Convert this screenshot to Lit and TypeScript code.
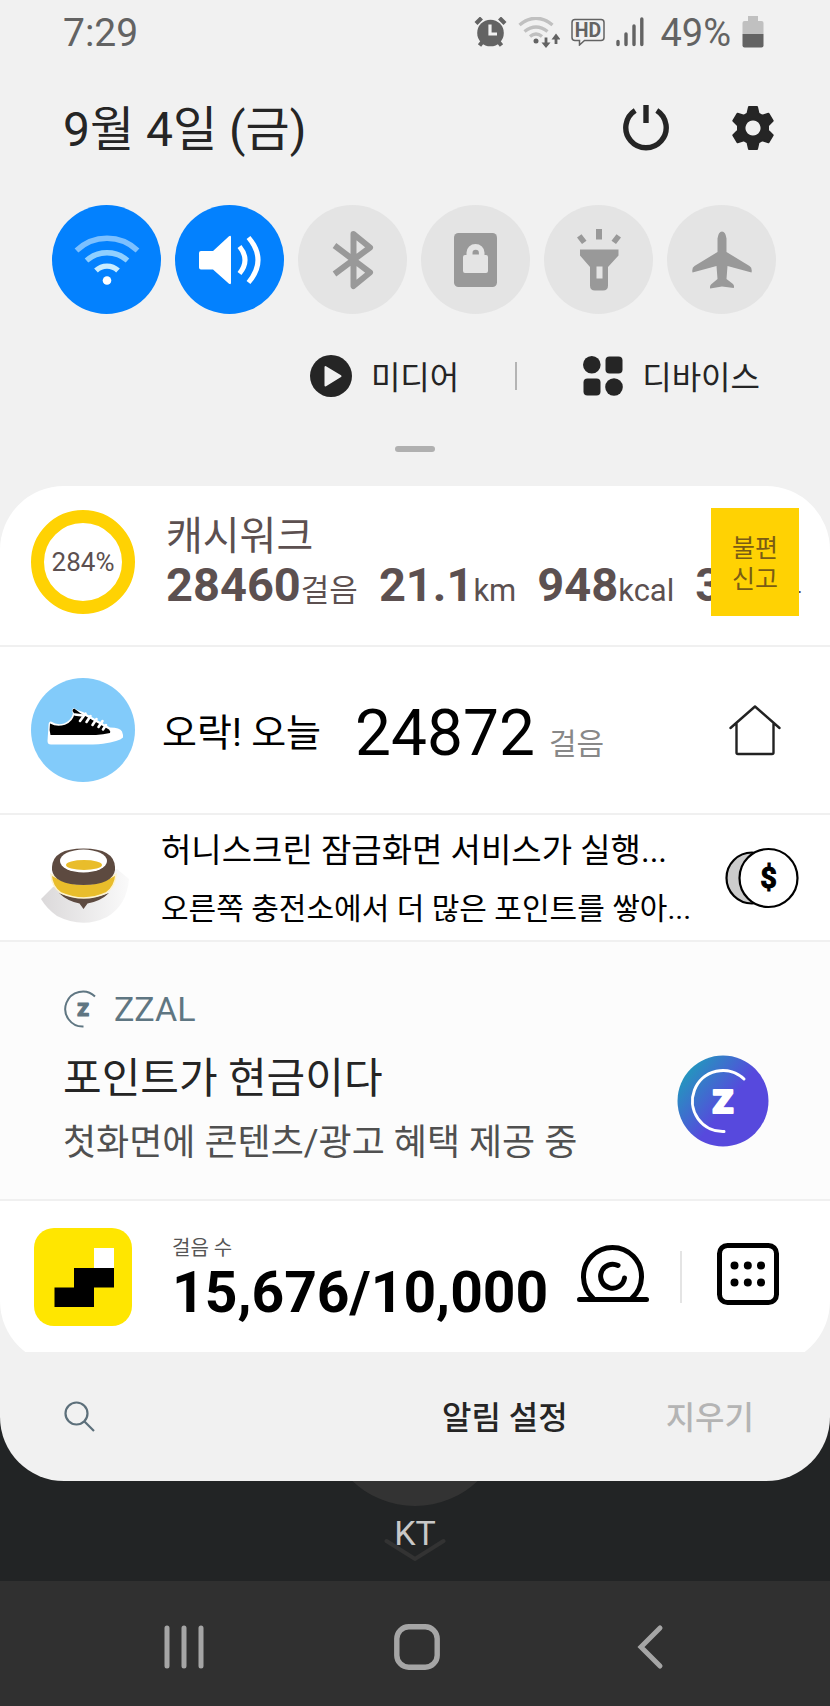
import { LitElement, html, svg, css } from "lit";
import { customElement, state } from "lit/decorators.js";

const wifi = svg`<svg width="66" height="54" viewBox="0 0 66 54" fill="none" stroke-width="5.4">
  <path d="M2.500 17.500A44 44 0 0 1 63.500 17.500" stroke="#7cc0ff"/>
  <path d="M12.500 27.500A31 31 0 0 1 53.500 27.500" stroke="#8fcfff"/>
  <path d="M22 37.500A16 16 0 0 1 44 37.500" stroke="#c8ecff"/>
  <circle cx="33" cy="47.500" r="4.300" fill="#fff"/></svg>`;

const sound = svg`<svg width="64" height="50" viewBox="0 0 64 50" fill="none" stroke="#fff" stroke-width="5">
  <path d="M3 16h12L31 1.200q2-1.200 2 1v45.600q0 2.200-2 1L15 34.500H3q-2 0-2-2V18q0-2 2-2z" fill="#fff" stroke="none"/>
  <path d="M41.500 11.500q11 13.500 0 27"/><path d="M50.500 2.500q19 22.500 0 45"/></svg>`;

const bluetooth = svg`<svg width="42" height="62" viewBox="0 0 42 62" fill="none" stroke="#999" stroke-width="6" stroke-linejoin="round">
  <path d="M2.500 16.500L38 43.500 21.500 57V5L38 18.500 2.500 45"/></svg>`;

const lock = svg`<svg width="43" height="54" viewBox="0 0 43 54">
  <rect width="43" height="54" rx="4.500" fill="#999"/>
  <path d="M12.500 22v-2.500a9 8.500 0 0 1 18 0V22h1.500q2 0 2 2v14q0 2-2 2H11q-2 0-2-2V24q0-2 2-2z" fill="#e4e4e4"/>
  <path d="M18.500 21.500v-1.500a3.200 3.200 0 0 1 6.400 0v1.500z" fill="#999"/></svg>`;

const torch = svg`<svg width="46" height="62" viewBox="0 0 46 62" fill="#999">
  <path d="M20 0h6v10.500h-6zM1 8.500l4.500-3.300 5 6.600L6 15zM45 8.500l-4.500-3.300-5 6.600L40 15z"/>
  <path fill-rule="evenodd" d="M4 20.500h38.500v6L32 38v18.500q0 5-5 5h-8q-5 0-5-5V38L4 26.500zM20.500 37.500v12h6v-12z"/></svg>`;

const plane = svg`<svg width="60" height="58" viewBox="0 0 60 58" fill="#999">
  <path d="M30 0.500q3.500 0 4.500 7v13.500L57.500 35q3 2 2 6.500L35.500 35 34.500 48l6.500 5q1.500 1.500 .8 4L30 55.500 18.200 57.500q-.7-2.500.8-4L25.500 48 24.500 35 .500 41.500q-1-4.500 2-6.500l23-14V7.500q1-7 4.500-7z"/></svg>`;

const alarm = svg`<svg width="33" height="30" viewBox="0 0 33 30" fill="none" stroke="#636363">
  <path d="M5.500 28.500l4-5M27.500 28.500l-4-5M2 6.500l5.500-5.500M31 6.500L25.500 1" stroke-width="4.200"/>
  <circle cx="16.500" cy="16" r="13.300" fill="#636363" stroke="none"/>
  <path d="M16 7.500v9.500h7" stroke="#f1f1f1" stroke-width="3.200"/></svg>`;

const wifiData = svg`<svg width="42" height="31" viewBox="0 0 42 31" fill="none" stroke-width="3.400">
  <path d="M1.500 8Q18-5.500 34.500 8M6.500 14.500q11.500-9 23 0M12 19.500q6-5 12 0" stroke="#c0c0c0"/>
  <circle cx="18" cy="24" r="2.500" fill="#636363"/>
  <path d="M28 20.500v8M38 27v-8" stroke="#636363" stroke-width="2.800"/>
  <path d="M23.500 25.500l4.500 5.500 4.500-5.500zM33.500 22.500l4.500-6 4.500 6z" fill="#636363"/></svg>`;

const hd = svg`<svg width="34" height="28" viewBox="0 0 34 28" fill="none" stroke="#636363">
  <path d="M4 1.500h26q3 0 3 3v15q0 3-3 3H13.500l-5 4.500v-4.500H4q-3 0-3-3v-15q0-3 3-3z" stroke-width="1.500"/>
  <text x="17" y="19" text-anchor="middle" font-family="Roboto, sans-serif" font-weight="700" font-size="19.500" fill="#636363" stroke="none">HD</text></svg>`;

const signal = svg`<svg class="signal" width="28" height="30" viewBox="0 0 28 30" stroke="#636363" stroke-width="3.400" stroke-linecap="round">
  <path d="M2 24.500v3M10 17v10.500M18 9v18.500M25.800 2v25.500"/></svg>`;

const battery = svg`<svg width="22" height="32" viewBox="0 0 22 32">
  <path d="M6 0h10v5h3.500q2 0 2 2v11H.5V7q0-2 2-2H6z" fill="#c0c0c0"/>
  <path d="M.5 18h21v11.500q0 2-2 2h-17q-2 0-2-2z" fill="#636363"/></svg>`;

const power = svg`<svg width="46" height="48" viewBox="0 0 46 48" fill="none" stroke="#252525" stroke-width="5.400">
  <path d="M12.200 6.500a20.200 20.200 0 1 0 21.600 0"/><path d="M23 1v18"/></svg>`;

const gear = svg`<svg width="44" height="46" viewBox="0 0 44 46">
  <path fill-rule="evenodd" fill="#252525" stroke="#252525" stroke-width="2" stroke-linejoin="round" d="M18 2h8l1.500 6.500 3.500 2.200 6.500-2 4.200 7-4.700 4.800v5l4.700 4.800-4.200 7-6.500-2-3.500 2.200L26 44h-8L16.500 37.500l-3.500-2.200-6.500 2-4.200-7L7 25.500v-5l-4.700-4.800 4.200-7 6.500 2 3.500-2.200zM22 14.500a8.500 8.500 0 1 0 .01 0z"/></svg>`;

const play = svg`<svg width="42" height="42" viewBox="0 0 42 42"><circle cx="21" cy="21" r="21" fill="#252525"/>
  <path d="M15.500 12v18.500L30.500 21.200z" fill="#f1f1f1" stroke="#f1f1f1" stroke-width="2" stroke-linejoin="round"/></svg>`;

const devices = svg`<svg width="40" height="40" viewBox="0 0 40 40" fill="#252525"><circle cx="8.800" cy="8.800" r="8.800"/>
  <rect x="22.500" y="0.500" width="17" height="17" rx="4"/><rect x="0.500" y="22.500" width="17" height="17" rx="4"/><circle cx="31" cy="31" r="8.800"/></svg>`;

const shoe = svg`<svg class="badge" width="104" height="104" viewBox="0 0 104 104">
  <circle cx="52" cy="52" r="52" fill="#82cbfa"/>
  <path d="M17.500 47.500q0-4 2.500-4 6 4 13 2 7-3 9-10-2-3 0-5 1.500-1 4 1.500l6 2L79 49.500q10 0 12 4 1.500 4 1 6-4 4-20 6.300-4 .6-10 .6H20q-3.500 0-3.500-3.500z" fill="#fff"/>
  <path d="M19 45.500q7 4 15 1.200 8-3.200 9.500-11L41.500 33q0-2.500 2-2.300l6 4.500L78 51.500q2 2 1 3.500-7 1.500-14 2H19.500q-1.500-5-.5-11.500z"/>
  <path d="M49 43l5.500-7.500M55.500 44l4-6M61.500 47l4-6M67.500 49l4-6M72 51.500l3-4.500M44 36.500l8 1" stroke="#fff" stroke-width="2.600" stroke-linecap="round"/></svg>`;

const home = svg`<svg width="54" height="54" viewBox="0 0 54 54" fill="none" stroke="#222" stroke-width="2.400" stroke-linejoin="round" stroke-linecap="round">
  <path d="M2.500 25L27 3.500 51.500 25M8.500 20.500v29q0 1.500 1.500 1.500h34q1.500 0 1.500-1.500v-29"/></svg>`;

const honey = svg`<svg class="pot" width="92" height="80" viewBox="0 0 92 80">
  <defs><linearGradient id="shade" x1="0" x2="1"><stop offset="0" stop-color="#dbd9da"/><stop offset="1" stop-color="#fafafa"/></linearGradient></defs>
  <path d="M2 54L14 42 78 24 90 34Q88 60 68 72 44 84 18 71 8 64 2 54z" fill="url(#shade)"/>
  <path d="M20 48q24 10 50 0-8 8-21.500 10.500L44.500 64 40.500 58.500Q28 56 20 48z" fill="#5d4a40"/>
  <path d="M12 29.500Q44 49 77 29.500 76 42 67 48 45 58 22 48 13 42 12 29.500z" fill="#e9bd2b" stroke="#fdf3cf" stroke-width="1.500"/>
  <path d="M13 22Q14 3.500 44.500 3.500T76 22v3Q74 39.500 44.500 40 15 39.500 13 25z" fill="#5d4a40"/>
  <ellipse cx="44.500" cy="16" rx="23.500" ry="11.500" fill="#fff"/><ellipse cx="45" cy="20" rx="18" ry="5" fill="#e9bd2b"/></svg>`;

const coins = svg`<svg width="74" height="62" viewBox="0 0 74 62" stroke="#000" stroke-width="2.200">
  <circle cx="27" cy="31" r="25.500" fill="#ccc"/><circle cx="43.500" cy="31" r="29" fill="#fff"/>
  <text x="43.500" y="41" text-anchor="middle" font-family="Roboto, sans-serif" font-weight="700" font-size="29" stroke-width="1">$</text></svg>`;

const zSmall = svg`<svg width="38" height="38" viewBox="0 0 38 38" fill="none" stroke="#5f7682">
  <path d="M32 6.500A17.500 17.500 0 1 0 20.500 36.500" stroke-width="2"/>
  <text x="20" y="26" text-anchor="middle" font-family="Roboto, sans-serif" font-weight="700" font-size="24" fill="#5f7682" stroke-width="1.200" stroke-linejoin="round">z</text></svg>`;

const zBadge = svg`<svg class="z-badge" width="92" height="92" viewBox="0 0 92 92">
  <defs><linearGradient id="zbg" x1="0.050" y1="0.150" x2="0.550" y2="0.550"><stop offset="0" stop-color="#1f9dbb"/><stop offset="1" stop-color="#5749dd"/></linearGradient></defs>
  <circle cx="46" cy="46" r="45.500" fill="url(#zbg)"/>
  <path d="M67 24A30.500 30.500 0 1 0 47 76.500" fill="none" stroke="#fff" stroke-width="3" stroke-linecap="round"/>
  <text x="46" y="57.500" text-anchor="middle" font-family="Roboto, sans-serif" font-weight="700" font-size="43" fill="#fff" stroke="#fff" stroke-width="2.200" stroke-linejoin="round">z</text></svg>`;

const steps = svg`<svg width="98" height="98" viewBox="0 0 98 98"><rect width="98" height="98" rx="20" fill="#ffe600"/>
  <path d="M60 20h20v20H60z" fill="#fff"/><path d="M40 40h40v19.500H60V79H20.500V59.500H40z"/></svg>`;

const snail = svg`<svg width="74" height="60" viewBox="0 0 74 60" fill="none" stroke="#000" stroke-width="5" stroke-linecap="round">
  <path d="M17 54A29 29 0 1 1 56 54M3.500 55.500h67"/><path d="M42 21.500A12 12 0 1 0 48.500 34"/></svg>`;

const keypad = svg`<svg width="64" height="64" viewBox="0 0 64 64"><rect x="3.500" y="3.500" width="57" height="57" rx="8" fill="none" stroke="#000" stroke-width="5"/>
  <path d="M18.500 23.500h.01M31.800 23.500h.01M45 23.500h.01M18.500 40.500h.01M31.800 40.500h.01M45 40.500h.01" stroke="#000" stroke-width="8" stroke-linecap="round"/></svg>`;

const search = svg`<svg width="32" height="32" viewBox="0 0 32 32" fill="none" stroke="#5c6f7a" stroke-width="2.200"><circle cx="12.500" cy="12.500" r="11"/><path d="M20.500 20.500L30 30"/></svg>`;

const recents = svg`<svg width="44" height="46" viewBox="0 0 44 46" stroke="#a5a5a5" stroke-width="5" stroke-linecap="round"><path d="M5 4v38M22 4v38M39 4v38"/></svg>`;
const homeKey = svg`<svg width="46" height="46" viewBox="0 0 46 46"><rect x="2.800" y="2.800" width="40.400" height="40.400" rx="12" fill="none" stroke="#a5a5a5" stroke-width="5.400"/></svg>`;
const back = svg`<svg width="28" height="46" viewBox="0 0 28 46" fill="none" stroke="#a5a5a5" stroke-width="5" stroke-linecap="round"><path d="M24 4L5 23l19 19"/></svg>`;

@customElement("quick-toggles")
export class QuickToggles extends LitElement {
  static styles = css`
    :host { display: flex; justify-content: space-between; padding: 0 54px 0 52px; }
    .toggle { width: 109px; height: 109px; padding: 0; border: 0; border-radius: 50%; background: #e4e4e4;
      display: flex; align-items: center; justify-content: center; }
    .toggle.on { background: #0381fe; }
  `;
  @state() private items = [
    { label: "Wi-Fi", icon: wifi, on: true },
    { label: "소리", icon: sound, on: true },
    { label: "블루투스", icon: bluetooth, on: false },
    { label: "화면 잠금", icon: lock, on: false },
    { label: "손전등", icon: torch, on: false },
    { label: "비행기 탑승 모드", icon: plane, on: false },
  ];
  render() {
    return this.items.map(
      (i) => html`<button class="toggle ${i.on ? "on" : ""}" aria-label=${i.label} aria-pressed=${i.on}>${i.icon}</button>`
    );
  }
}

@customElement("app-root")
export class AppRoot extends LitElement {
  static styles = css`
    :host { display: flex; flex-direction: column; min-height: 100vh; background: #222425; color: #252525;
      font-family: Roboto, "Noto Sans CJK KR", sans-serif; }
    * { box-sizing: border-box; }
    svg { display: block; flex: none; }
    button { font: inherit; color: inherit; background: none; border: 0; padding: 0; margin: 0; }
    ul { list-style: none; margin: 0; padding: 0; }
    .panel { background: #f1f1f1; border-radius: 0 0 64px 64px; position: relative; }
    .status { display: flex; align-items: center; height: 64px; padding: 0 66px 0 63px; font-size: 39px; line-height: 48px; color: #636363; }
    .time { padding-top: 2px; }
    .icons { display: flex; align-items: center; margin-left: auto; gap: 11px; }
    .signal { margin-right: 5px; }
    .charge { font-size: 38px; padding-top: 2px; }
    .head { display: flex; align-items: center; height: 141px; padding: 0 55px 14px 63px; }
    .date { font-size: 48px; line-height: 64px; font-weight: 400; margin: 0 auto 0 0; padding-top: 4px; }
    .head-actions { display: flex; align-items: center; gap: 62px; }
    .shortcuts { display: flex; justify-content: flex-end; align-items: center; padding: 36px 70px 0 0; height: 88px; font-size: 32px; line-height: 48px; }
    .shortcut { display: flex; align-items: center; gap: 19px; }
    .shortcut-label { padding-top: 3px; }
    .rule { width: 2px; height: 28px; background: #b4b4b4; margin: 0 66px 0 56px; }
    .handle { width: 40px; height: 6px; border-radius: 3px; background: #b0b0b0; margin: 44px auto 34px; }
    .clip { overflow: hidden; }
    .list { background: #fff; border-radius: 64px; overflow: hidden; margin-bottom: -13px; }
    .item { position: relative; display: flex; align-items: center; border-bottom: 2px solid #f0f0f0; }
    .item:last-child { border-bottom: 0; }

    .cash { height: 161px; padding: 0 28px 0 31px; gap: 31px; color: #5c5050; }
    .ring { width: 104px; height: 104px; border: 13px solid #ffd203; border-radius: 50%; margin-bottom: 8px; flex: none; display: flex; align-items: center; justify-content: center; font-size: 26px; line-height: 32px; }
    .cash-text { flex: 1; min-width: 0; overflow: hidden; white-space: nowrap; padding-top: 4px; }
    .cash-title { font-size: 40px; line-height: 42px; }
    .stats { display: flex; gap: 21px; font-size: 31px; line-height: 54px; }
    .stats b { font-size: 47px; }
    .stats .last { font-size: 28px; }
    .report { position: absolute; top: 22px; right: 31px; width: 88px; height: 108px; padding-top: 4px; background: #ffd203; color: #7a5c14; font-size: 25px; line-height: 31px; }

    .walk { height: 168px; padding: 0 48px 0 31px; color: #000; }
    .badge { margin-right: 27px; }
    .walk-label { font-size: 38px; line-height: 48px; margin-right: 34px; padding-top: 6px; }
    .walk-count { font-size: 64px; line-height: 80px; margin-right: 14px; padding-top: 8px; }
    .walk-unit { font-size: 30px; line-height: 40px; color: #888; padding-top: 28px; }
    .push { margin-left: auto; }

    .honey { height: 127px; padding: 0 31px 0 39px; color: #000; gap: 30px; }
    .pot { margin-top: 14px; }
    .honey-text { flex: 1; white-space: nowrap; padding-top: 4px; }
    .honey-title { font-size: 33px; line-height: 58px; }
    .honey-body { font-size: 30px; line-height: 58px; }

    .zzal { height: 259px; padding: 20px 61px 0 63px; background: #fcfcfc; }
    .zzal-text { flex: 1; }
    .app { display: flex; align-items: center; gap: 13px; font-size: 34px; line-height: 44px; color: #5f7682; }
    .zzal-title { font-size: 42px; line-height: 64px; margin-top: 16px; }
    .zzal-body { font-size: 36px; line-height: 64px; color: #505050; }
    .z-badge { margin-top: 40px; }

    .goal { height: 164px; padding: 0 50px 13px 34px; color: #000; }
    .goal-text { margin-left: 40px; padding-top: 8px; }
    .goal-label { font-size: 20px; line-height: 24px; color: #555; }
    .goal-count { font-size: 57px; line-height: 66px; font-weight: 700; }
    .goal-actions { display: flex; align-items: center; margin-left: auto; padding-bottom: 6px; }
    .goal-rule { width: 2px; height: 52px; background: #e4e4e4; margin: 6px 34px 0 30px; }

    .foot { display: flex; align-items: center; height: 129px; padding: 0 76px 0 64px; font-size: 32px; line-height: 48px; font-weight: 500; }
    .foot-actions { display: flex; gap: 98px; margin-left: auto; padding-top: 2px; }
    .muted { color: #b4b4b4; }

    .behind { flex: 1; display: flex; flex-direction: column; align-items: center; position: relative; height: 100px; overflow: hidden; padding-top: 32px; }
    .orb { position: absolute; left: 50%; bottom: calc(100% - 25px); width: 182px; height: 182px; margin-left: -91px; border-radius: 50%; background: #333; }
    .chevron { position: absolute; left: 50%; top: 56px; margin-left: -31px; }
    .carrier { position: relative; font-size: 34px; line-height: 40px; color: #c8c8c8; }
    .nav { display: grid; grid-template-columns: repeat(3, 1fr); justify-items: center; align-items: center; height: 125px; padding: 6px 64px 0 68px; background: #303030; }
  `;

  render() {
    return html`
      <main class="panel">
        <div class="status">
          <span class="time">7:29</span>
          <div class="icons">${alarm}${wifiData}${hd}${signal}<span class="charge">49%</span>${battery}</div>
        </div>
        <header class="head">
          <h1 class="date">9월 4일 (금)</h1>
          <div class="head-actions">
            <button aria-label="전원">${power}</button>
            <button aria-label="설정">${gear}</button>
          </div>
        </header>
        <quick-toggles></quick-toggles>
        <div class="shortcuts">
          <button class="shortcut">${play}<span class="shortcut-label">미디어</span></button>
          <div class="rule"></div>
          <button class="shortcut">${devices}<span class="shortcut-label">디바이스</span></button>
        </div>
        <div class="handle"></div>
        <div class="clip">
          <ul class="list">
            <li class="item cash">
              <div class="ring">284%</div>
              <div class="cash-text">
                <div class="cash-title">캐시워크</div>
                <div class="stats">
                  <span><b>28460</b>걸음</span><span><b>21.1</b>km</span><span><b>948</b>kcal</span><span class="last"><b>308</b>분</span>
                </div>
              </div>
              <button class="report">불편<br />신고</button>
            </li>
            <li class="item walk">
              ${shoe}
              <span class="walk-label">오락! 오늘</span>
              <span class="walk-count">24872</span>
              <span class="walk-unit">걸음</span>
              <button class="push" aria-label="홈">${home}</button>
            </li>
            <li class="item honey">
              ${honey}
              <div class="honey-text">
                <div class="honey-title">허니스크린 잠금화면 서비스가 실행...</div>
                <div class="honey-body">오른쪽 충전소에서 더 많은 포인트를 쌓아...</div>
              </div>
              <button aria-label="충전소">${coins}</button>
            </li>
            <li class="item zzal">
              <div class="zzal-text">
                <div class="app">${zSmall}<span>ZZAL</span></div>
                <div class="zzal-title">포인트가 현금이다</div>
                <div class="zzal-body">첫화면에 콘텐츠/광고 혜택 제공 중</div>
              </div>
              ${zBadge}
            </li>
            <li class="item goal">
              ${steps}
              <div class="goal-text">
                <div class="goal-label">걸음 수</div>
                <div class="goal-count">15,676/10,000</div>
              </div>
              <div class="goal-actions">
                <button aria-label="캐시">${snail}</button>
                <div class="goal-rule"></div>
                <button aria-label="메뉴">${keypad}</button>
              </div>
            </li>
          </ul>
        </div>
        <footer class="foot">
          <button aria-label="검색">${search}</button>
          <div class="foot-actions">
            <button>알림 설정</button>
            <button class="muted">지우기</button>
          </div>
        </footer>
      </main>
      <div class="behind">
        <div class="orb"></div>
        <svg class="chevron" width="62" height="26" viewBox="0 0 62 26" fill="none" stroke="#333" stroke-width="4" stroke-linecap="round"><path d="M2.500 4L31 22 59.500 4" /></svg>
        <span class="carrier">KT</span>
      </div>
      <nav class="nav">
        <button aria-label="최근 앱">${recents}</button>
        <button aria-label="홈 화면">${homeKey}</button>
        <button aria-label="뒤로">${back}</button>
      </nav>
    `;
  }
}
